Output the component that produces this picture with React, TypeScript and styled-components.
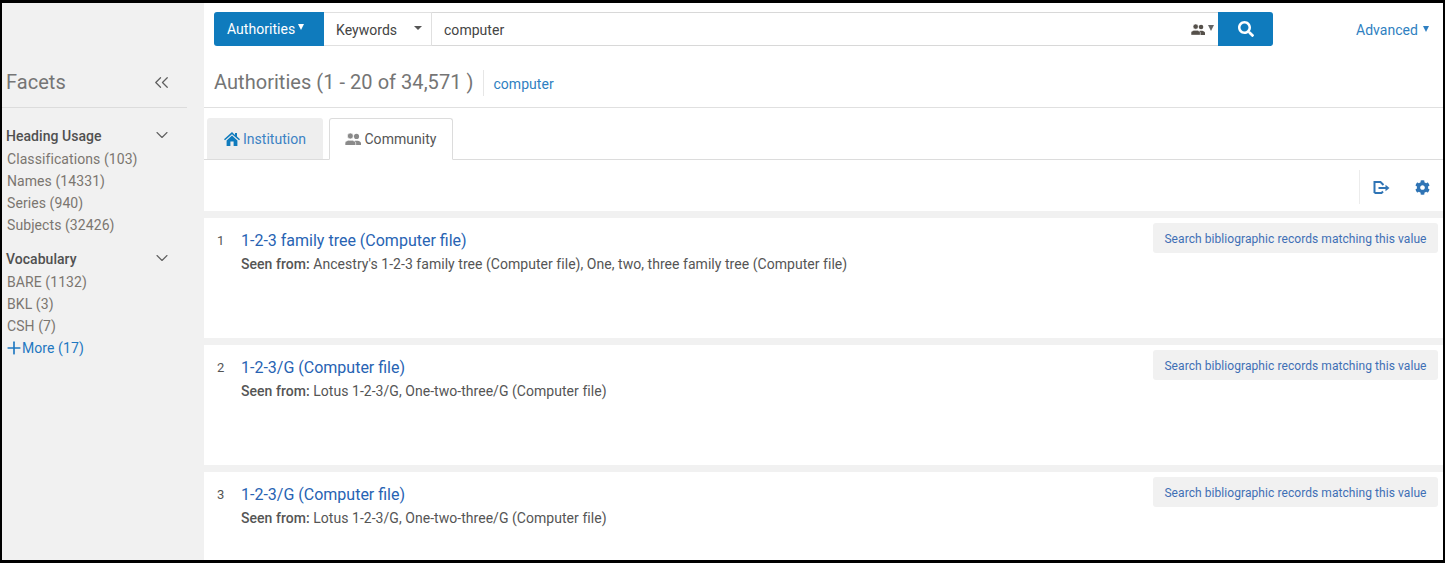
import React from 'react';
import styled, { createGlobalStyle } from 'styled-components';
import { FaSearch, FaCog } from 'react-icons/fa';
import { ChevronDown, ChevronsLeft, Plus } from 'lucide-react';

const facets = [
  {
    title: 'Heading Usage',
    items: ['Classifications (103)', 'Names (14331)', 'Series (940)', 'Subjects (32426)'],
  },
  {
    title: 'Vocabulary',
    items: ['BARE (1132)', 'BKL (3)', 'CSH (7)'],
    more: 'More (17)',
  },
];

const records = [
  {
    title: '1-2-3 family tree (Computer file)',
    seen: "Ancestry's 1-2-3 family tree (Computer file), One, two, three family tree (Computer file)",
  },
  { title: '1-2-3/G (Computer file)', seen: 'Lotus 1-2-3/G, One-two-three/G (Computer file)' },
  { title: '1-2-3/G (Computer file)', seen: 'Lotus 1-2-3/G, One-two-three/G (Computer file)' },
];

const ExportIcon = () => (
  <svg width="17" height="15" viewBox="0 0 17 15" fill="none">
    <path d="M1.5 13V2h6l3 3M1.5 13H8.5l1.5-1.5" stroke="#2f74b5" strokeWidth="2" />
    <path d="M5.5 8h8" stroke="#2f74b5" strokeWidth="2" />
    <path d="M12.5 4.8L16.5 8l-4 3.2z" fill="#2f74b5" />
  </svg>
);

const PeopleIcon: React.FC<{ color: string; size: number }> = ({ color, size }) => (
  <svg width={size} height={(size * 12) / 15} viewBox="0 0 15 12" fill={color}>
    <circle cx="10.8" cy="3.2" r="2.4" />
    <path d="M7.5 12V9.2c0-1.2 1.3-1.6 2-2h2.6c.9.4 2.9.8 2.9 2.2V12z" />
    <circle cx="5" cy="2.8" r="2.8" stroke="#fff" strokeWidth="0.6" />
    <path d="M0 12V9.2c0-1.3 1.7-1.7 3-2.4h4c1.3.7 3 1.1 3 2.4V12z" stroke="#fff" strokeWidth="0.6" />
  </svg>
);

const HomeIcon = () => (
  <svg width="16" height="14" viewBox="0 0 16 14" fill="#0f7bbd">
    <path d="M8 0L0 7.2l1 1.1L8 2.2l7 6.1 1-1.1-3-2.7V1h-2v1.9z" />
    <path d="M2.6 8.4L8 3.6l5.4 4.8V14H9.6V9.6H6.4V14H2.6z" />
  </svg>
);

export default function App() {
  return (
    <>
      <GlobalStyle />
      <Frame>
        <Sidebar>
          <FacetsHeader>
            <FacetsTitle>Facets</FacetsTitle>
            <ChevronsLeft size={23} color="#5f5f5f" strokeWidth={1.3} />
          </FacetsHeader>
          {facets.map((group) => (
            <FacetGroup key={group.title}>
              <FacetHead>
                <span>{group.title}</span>
                <ChevronDown size={20} color="#5f5f5f" strokeWidth={1.3} />
              </FacetHead>
              {group.items.map((item) => (
                <FacetItem key={item}>{item}</FacetItem>
              ))}
              {group.more && (
                <MoreLink>
                  <Plus size={20} strokeWidth={2} />
                  {group.more}
                </MoreLink>
              )}
            </FacetGroup>
          ))}
        </Sidebar>
        <Main>
          <TopBar>
            <SearchBar>
              <ScopeButton>
                Authorities <SmallCaret $color="#fff" />
              </ScopeButton>
              <FieldSelect>
                Keywords
                <FlatCaret />
              </FieldSelect>
              <QueryBox>
                <span>computer</span>
                <CommunityPick>
                  <PeopleIcon size={14} color="#55504a" />
                  <SmallCaret $color="#666" />
                </CommunityPick>
              </QueryBox>
              <SearchButton aria-label="Search">
                <FaSearch size={16} color="#fff" />
              </SearchButton>
            </SearchBar>
            <Advanced>
              Advanced <SmallCaret $color="#2f7fc1" />
            </Advanced>
          </TopBar>
          <ResultsHeader>
            <ResultsTitle>Authorities (1 - 20 of 34,571 )</ResultsTitle>
            <QueryTag>computer</QueryTag>
          </ResultsHeader>
          <TabRow>
            <Tab>
              <HomeIcon />
              <TabLabel $active={false}>Institution</TabLabel>
            </Tab>
            <Tab $active>
              <PeopleIcon size={16} color="#8a8a8a" />
              <TabLabel $active>Community</TabLabel>
            </Tab>
          </TabRow>
          <Toolbar>
            <ToolIcons>
              <ExportIcon />
              <FaCog size={15} color="#2f74b5" />
            </ToolIcons>
          </Toolbar>
          <RecordList>
            {records.map((record, i) => (
              <RecordCard key={i}>
                <RecordNo>{i + 1}</RecordNo>
                <RecordBody>
                  <RecordTitle>{record.title}</RecordTitle>
                  <SeenFrom>
                    <strong>Seen from:</strong> {record.seen}
                  </SeenFrom>
                </RecordBody>
                <MatchButton>Search bibliographic records matching this value</MatchButton>
              </RecordCard>
            ))}
          </RecordList>
        </Main>
      </Frame>
    </>
  );
}

const GlobalStyle = createGlobalStyle`
  html, body {
    margin: 0;
    padding: 0;
    background: #000;
  }
  body {
    font-family: Roboto, "Liberation Sans", sans-serif;
    color: #444;
    letter-spacing: 0.04px;
  }
  * {
    box-sizing: border-box;
  }
`;
const Frame = styled.div`
  width: 1445px;
  height: 563px;
  border-style: solid;
  border-color: #000;
  border-width: 3px 2px 3px 2px;
  background: #fff;
  display: flex;
  overflow: hidden;
`;
const Sidebar = styled.aside`
  width: 202px;
  flex: none;
  background: #f1f1f1;
  padding-top: 55px;
`;
const FacetsHeader = styled.div`
  width: 185px;
  height: 50px;
  padding: 0 14px 1px 4px;
  margin-bottom: 17px;
  display: flex;
  align-items: center;
  justify-content: space-between;
  border-bottom: 1px solid #dcdcdc;
`;
const FacetsTitle = styled.h2`
  margin: 0;
  font-size: 20px;
  font-weight: 400;
  color: #757575;
`;
const FacetGroup = styled.section`
  width: 185px;
  padding-left: 4px;
  margin-bottom: 12px;
`;
const FacetHead = styled.div`
  height: 23px;
  padding: 0 15px 2px 0;
  display: flex;
  align-items: center;
  justify-content: space-between;
  font-size: 14px;
  font-weight: 500;
  color: #505050;
  svg {
    margin-bottom: 1px;
  }
`;
const FacetItem = styled.div`
  height: 22px;
  line-height: 22px;
  padding-left: 1px;
  font-size: 14px;
  letter-spacing: 0.08px;
  color: #7b7670;
`;
const MoreLink = styled.div`
  height: 22px;
  display: flex;
  align-items: center;
  font-size: 14px;
  letter-spacing: 0.08px;
  color: #1f78c1;
  svg {
    margin: 0 -2px 0 -2px;
  }
`;
const Main = styled.main`
  flex: 1;
  min-width: 0;
  display: flex;
  flex-direction: column;
`;
const TopBar = styled.div`
  height: 55px;
  flex: none;
  padding: 9px 14px 0 10px;
  display: flex;
  align-items: flex-start;
  justify-content: space-between;
`;
const SearchBar = styled.div`
  width: 1059px;
  height: 34px;
  display: flex;
`;
const ScopeButton = styled.div`
  width: 110px;
  padding: 0 0 1px 13px;
  display: flex;
  align-items: center;
  gap: 3px;
  background: #0f7bbd;
  color: #fff;
  font-size: 14px;
  border-radius: 3px 0 0 3px;
`;
const FieldSelect = styled.div`
  width: 108px;
  padding: 1px 9px 0 12px;
  display: flex;
  align-items: center;
  justify-content: space-between;
  font-size: 14px;
  color: #444;
  border: solid #e0e0e0;
  border-width: 1px 1px 1px 0;
`;
const QueryBox = styled.div`
  flex: 1;
  padding: 1px 4px 0 12px;
  display: flex;
  align-items: center;
  justify-content: space-between;
  font-size: 14px;
  color: #444;
  border: solid #d8d8d8;
  border-width: 1px 0;
`;
const CommunityPick = styled.div`
  display: flex;
  align-items: center;
  gap: 3px;
`;
const SearchButton = styled.button`
  width: 55px;
  padding: 0;
  border: none;
  background: #0f7bbd;
  border-radius: 0 3px 3px 0;
  display: flex;
  align-items: center;
  justify-content: center;
`;
const SmallCaret = styled.i<{ $color: string }>`
  display: inline-block;
  width: 0;
  height: 0;
  border-style: solid;
  border-width: 6px 3.5px 0;
  border-color: ${(p) => p.$color} transparent transparent;
  margin-bottom: 3px;
`;
const FlatCaret = styled.i`
  display: inline-block;
  width: 0;
  height: 0;
  border-style: solid;
  border-width: 4px 4px 0;
  border-color: #555 transparent transparent;
  margin-bottom: 3px;
`;
const Advanced = styled.div`
  height: 34px;
  padding-top: 2px;
  display: flex;
  align-items: center;
  gap: 5px;
  font-size: 14px;
  color: #2f7fc1;
`;
const ResultsHeader = styled.div`
  height: 50px;
  flex: none;
  padding: 0 0 2px 10px;
  display: flex;
  align-items: center;
  border-bottom: 1px solid #e0e0e0;
`;
const ResultsTitle = styled.h1`
  margin: 0;
  padding-right: 10px;
  font-size: 20px;
  font-weight: 400;
  color: #757575;
`;
const QueryTag = styled.div`
  height: 26px;
  margin-top: 2px;
  padding: 2px 0 0 9px;
  display: flex;
  align-items: center;
  font-size: 14px;
  color: #2f7fc1;
  border-left: 1px solid #e6e6e6;
`;
const TabRow = styled.div`
  height: 52px;
  flex: none;
  padding: 10px 0 0 3px;
  display: flex;
  align-items: flex-end;
  gap: 6px;
  border-bottom: 1px solid #dcdcdc;
`;
const Tab = styled.div<{ $active?: boolean }>`
  height: ${(p) => (p.$active ? '42px' : '41px')};
  width: ${(p) => (p.$active ? '124px' : '116px')};
  margin-bottom: ${(p) => (p.$active ? '-1px' : '0')};
  display: flex;
  align-items: center;
  justify-content: center;
  gap: 3px;
  font-size: 14px;
  border-radius: 3px 3px 0 0;
  background: ${(p) => (p.$active ? '#fff' : '#eeeeee')};
  border: ${(p) => (p.$active ? '1px solid #dcdcdc' : 'none')};
  border-bottom: ${(p) => (p.$active ? '1px solid #fff' : 'none')};
`;
const TabLabel = styled.span<{ $active: boolean }>`
  color: ${(p) => (p.$active ? '#555' : '#3b82c4')};
`;
const Toolbar = styled.div`
  height: 51px;
  flex: none;
  padding-top: 10px;
  display: flex;
  justify-content: flex-end;
`;
const ToolIcons = styled.div`
  width: 84px;
  height: 34px;
  padding: 0 13px;
  display: flex;
  align-items: center;
  justify-content: space-between;
  border-left: 1px solid #ececec;
`;
const RecordList = styled.div`
  flex: 1;
  min-height: 0;
  padding-top: 7px;
  background: #f1f1f1;
  display: flex;
  flex-direction: column;
  gap: 7px;
  overflow: hidden;
`;
const RecordCard = styled.article`
  height: 120px;
  flex: none;
  padding: 5px 5px 0 13px;
  background: #fff;
  display: flex;
  align-items: flex-start;
`;
const RecordNo = styled.div`
  width: 24px;
  padding-top: 10px;
  font-size: 13px;
  line-height: 15px;
  color: #555;
`;
const RecordBody = styled.div`
  flex: 1;
  padding-top: 7px;
`;
const RecordTitle = styled.div`
  font-size: 16px;
  line-height: 22px;
  letter-spacing: 0;
  color: #2763b3;
`;
const SeenFrom = styled.div`
  margin-top: 3px;
  font-size: 14px;
  line-height: 18px;
  color: #555;
  strong {
    font-weight: 500;
  }
`;
const MatchButton = styled.div`
  width: 285px;
  height: 30px;
  padding-top: 1px;
  flex: none;
  display: flex;
  align-items: center;
  justify-content: center;
  font-size: 12px;
  letter-spacing: 0.07px;
  color: #3f6fb5;
  background: #f1f1f1;
  border-radius: 3px;
`;
